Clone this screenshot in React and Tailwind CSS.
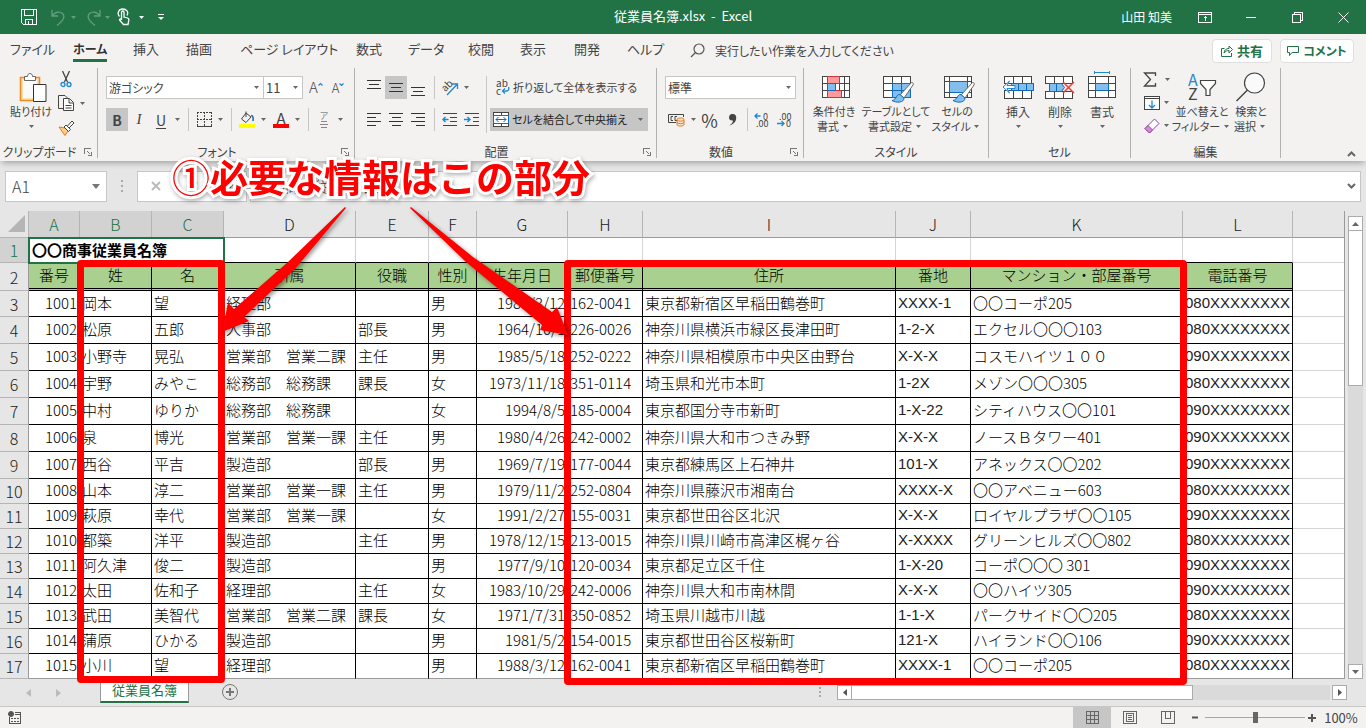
import React from 'react';

/* ---------- data ---------- */

const columns = [
  { key: 'no', letter: 'A', title: '番号', width: 'w-[51px]', right: true, selected: true },
  { key: 'last', letter: 'B', title: '姓', width: 'w-[72px]', selected: true },
  { key: 'first', letter: 'C', title: '名', width: 'w-[72px]', selected: true },
  { key: 'dept', letter: 'D', title: '所属', width: 'w-[132px]' },
  { key: 'post', letter: 'E', title: '役職', width: 'w-[73px]' },
  { key: 'sex', letter: 'F', title: '性別', width: 'w-[48px]' },
  { key: 'birth', letter: 'G', title: '生年月日', width: 'w-[91px]', right: true },
  { key: 'zip', letter: 'H', title: '郵便番号', width: 'w-[75px]' },
  { key: 'address', letter: 'I', title: '住所', width: 'w-[253px]' },
  { key: 'block', letter: 'J', title: '番地', width: 'w-[75px]', latin: true },
  { key: 'building', letter: 'K', title: 'マンション・部屋番号', width: 'w-[212px]' },
  { key: 'tel', letter: 'L', title: '電話番号', width: 'w-[110px]', latin: true },
];

const employees = [
  ['1001', '岡本', '望', '経理部', '', '男', '1988/3/12', '162-0041', '東京都新宿区早稲田鶴巻町', 'XXXX-1', '〇〇コーポ205', '080XXXXXXXX'],
  ['1002', '松原', '五郎', '人事部', '部長', '男', '1964/10/1', '226-0026', '神奈川県横浜市緑区長津田町', '1-2-X', 'エクセル〇〇〇103', '080XXXXXXXX'],
  ['1003', '小野寺', '晃弘', '営業部　営業二課', '主任', '男', '1985/5/18', '252-0222', '神奈川県相模原市中央区由野台', 'X-X-X', 'コスモハイツ１００', '090XXXXXXXX'],
  ['1004', '宇野', 'みやこ', '総務部　総務課', '課長', '女', '1973/11/18', '351-0114', '埼玉県和光市本町', '1-2X', 'メゾン〇〇〇305', '080XXXXXXXX'],
  ['1005', '中村', 'ゆりか', '総務部　総務課', '', '女', '1994/8/5', '185-0004', '東京都国分寺市新町', '1-X-22', 'シティハウス〇〇101', '090XXXXXXXX'],
  ['1006', '泉', '博光', '営業部　営業一課', '主任', '男', '1980/4/26', '242-0002', '神奈川県大和市つきみ野', 'X-X-X', 'ノースＢタワー401', '090XXXXXXXX'],
  ['1007', '西谷', '平吉', '製造部', '部長', '男', '1969/7/19', '177-0044', '東京都練馬区上石神井', '101-X', 'アネックス〇〇202', '090XXXXXXXX'],
  ['1008', '山本', '淳二', '営業部　営業一課', '主任', '男', '1979/11/2', '252-0804', '神奈川県藤沢市湘南台', 'XXXX-X', '〇〇アベニュー603', '080XXXXXXXX'],
  ['1009', '萩原', '幸代', '営業部　営業一課', '', '女', '1991/2/27', '155-0031', '東京都世田谷区北沢', 'X-X-X', 'ロイヤルプラザ〇〇105', '090XXXXXXXX'],
  ['1010', '都築', '洋平', '製造部', '主任', '男', '1978/12/15', '213-0015', '神奈川県川崎市高津区梶ヶ谷', 'X-XXXX', 'グリーンヒルズ〇〇802', '080XXXXXXXX'],
  ['1011', '阿久津', '俊二', '製造部', '', '男', '1977/9/10', '120-0034', '東京都足立区千住', '1-X-20', 'コーポ〇〇〇 301', '090XXXXXXXX'],
  ['1012', '太田', '佐和子', '経理部', '主任', '女', '1983/10/29', '242-0006', '神奈川県大和市南林間', 'X-X-X', '〇〇ハイツ305', '090XXXXXXXX'],
  ['1013', '武田', '美智代', '営業部　営業二課', '課長', '女', '1971/7/31', '350-0852', '埼玉県川越市川越', '1-1-X', 'パークサイド〇〇205', '080XXXXXXXX'],
  ['1014', '蒲原', 'ひかる', '製造部', '', '男', '1981/5/2', '154-0015', '東京都世田谷区桜新町', '121-X', 'ハイランド〇〇106', '090XXXXXXXX'],
  ['1015', '小川', '望', '経理部', '', '男', '1988/3/12', '162-0041', '東京都新宿区早稲田鶴巻町', 'XXXX-1', '〇〇コーポ205', '080XXXXXXXX'],
];

const tabs = [
  { name: 'ファイル', width: 'w-[63px]' },
  { name: 'ホーム', width: 'w-[60px]', active: true },
  { name: '挿入', width: 'w-[53px]' },
  { name: '描画', width: 'w-[54px]' },
  { name: 'ページ レイアウト', width: 'w-[116px]' },
  { name: '数式', width: 'w-[52px]' },
  { name: 'データ', width: 'w-[60px]' },
  { name: '校閲', width: 'w-[52px]' },
  { name: '表示', width: 'w-[54px]' },
  { name: '開発', width: 'w-[53px]' },
  { name: 'ヘルプ', width: 'w-[63px]' },
];

/* ---------- small parts ---------- */

const Icon = ({ w, h, children, className = '', ...rest }) => (
  <svg
    width={w}
    height={h}
    viewBox={`0 0 ${w} ${h}`}
    fill="none"
    stroke="#444"
    aria-hidden="true"
    className={`shrink-0 ${className}`}
    {...rest}
  >
    {children}
  </svg>
);

const Caret = ({ className = '', color = '#666' }) => (
  <span className={`flex shrink-0 items-center justify-center ${className}`}>
    <Icon w={5} h={3} stroke="none">
      <path d="M0 0h5L2.5 3z" fill={color} />
    </Icon>
  </span>
);

const Tool = ({ label, className = '', children }) => (
  <button type="button" aria-label={label} className={`flex h-[23px] shrink-0 items-center justify-center ${className}`}>
    {children}
  </button>
);

const Sep = ({ className = '' }) => (
  <span className={`flex h-[23px] shrink-0 justify-center ${className}`}>
    <span className="h-full w-px bg-[#c8c6c4]" />
  </span>
);

const Group = ({ name, className = '', launcher, children }) => (
  <section className={`flex h-[90px] shrink-0 flex-col justify-between border-r border-[#b1b1b1] ${className}`}>
    {children}
    <div className="flex h-3 items-center">
      <span className="flex-1 text-center text-xs leading-3 whitespace-nowrap">{name}</span>
      {launcher && (
        <button type="button" aria-label={`${name}の設定`} className="w-[18px]">
          <Icon w={8} h={8} shapeRendering="crispEdges" stroke="#777" className="mx-auto">
            <path d="M.5 6V.5H7M3 3l3 3M7.5 3.5v4h-4" />
          </Icon>
        </button>
      )}
    </div>
  </section>
);

const BigButton = ({ icon, lines, below, className = 'text-[11px]' }) => (
  <button type="button" className={`flex shrink-0 flex-col items-center leading-[15px] whitespace-nowrap ${className}`}>
    <span className="flex h-[34px] items-center justify-center">{icon}</span>
    {lines.map((line, i) => (
      <span key={line} className="flex justify-center">
        {line}
        {!below && i === lines.length - 1 && <Caret className="w-3" />}
      </span>
    ))}
    {below && <Caret className="h-[15px]" />}
  </button>
);

const Picker = ({ label, value, className = '' }) => (
  <span className={`relative flex h-[23px] items-center border border-[#c6c6c6] bg-white ${className}`}>
    <select aria-label={label} className="h-full w-full appearance-none bg-transparent pl-0.5 outline-none">
      <option>{value}</option>
    </select>
    <Caret className="pointer-events-none absolute right-1" />
  </span>
);

const Lines = ({ d }) => (
  <Icon w={16} h={16} shapeRendering="crispEdges" stroke="#333">
    <path d={d} />
  </Icon>
);

const Brush = () => (
  <g>
    <path d="M29.5 7.5c2 0 2 1.500 1.500 2.500L22 23l-4-3z" fill="#fff" stroke="#666" />
    <path d="M18 19.500c-4-.5-3 5-8 6 4 2.500 12 2.500 12-2.500z" fill="#83beec" stroke="#0f6cbd" />
  </g>
);

/* ---------- title bar ---------- */

const TitleBar = () => (
  <header className="flex h-[34px] items-center bg-[#217346] text-[13px] text-white">
    <div className="flex flex-1 items-center">
      <button type="button" aria-label="上書き保存" className="ml-5 w-[31px]">
        <Icon w={18} h={18} stroke="#fff" shapeRendering="crispEdges">
          <path d="M1.500 1.500h15v15H3.500l-2-2zM4.500 1.500v6h9v-6M5.500 16.500v-5h7v5M8.500 16v-3" />
        </Icon>
      </button>
      <button type="button" aria-label="元に戻す" className="flex w-[34px] items-center opacity-30">
        <Icon w={16} h={17} stroke="#fff" strokeWidth="1.3">
          <path d="M1 1v6h6M1.500 6.500C4 3 8 2 11.500 4.500c3 3 1 7-5.500 12" />
        </Icon>
        <Caret color="#fff" className="w-3" />
      </button>
      <button type="button" aria-label="やり直し" className="flex w-[32px] items-center opacity-30">
        <Icon w={16} h={17} stroke="#fff" strokeWidth="1.3">
          <path d="M15 1v6H9M14.500 6.500C12 3 8 2 4.500 4.500c-3 3-1 7 5.500 12" />
        </Icon>
        <Caret color="#fff" className="w-3" />
      </button>
      <button type="button" aria-label="タッチ/マウス モードの切り替え" className="flex w-[36px] items-center">
        <Icon w={14} h={18} stroke="#fff" strokeWidth="1.3">
          <path d="M4.500 12V4.500c0-2 2.500-2 2.500 0V9l3.500 1c1.200.4 1.500 1 1.300 2l-.8 4.500H6.500L2.500 12c0-1.500 1.200-1.500 2 0M2.500 8.500C-.5 5 2 1 5.700 1s6.300 3 4.300 6.500" />
        </Icon>
        <Caret color="#fff" className="ml-1 w-3" />
      </button>
      <button type="button" aria-label="クイック アクセス ツール バーのカスタマイズ" className="ml-1">
        <Icon w={8} h={7} stroke="#fff">
          <path d="M1 .5h6" />
          <path d="M1 3h6L4 6z" fill="#fff" stroke="none" />
        </Icon>
      </button>
    </div>
    <h1 className="pb-0.5 whitespace-pre">従業員名簿.xlsx  -  Excel</h1>
    <div className="flex flex-1 items-center justify-end">
      <span className="mr-[26px] text-xs">山田 知美</span>
      <button type="button" aria-label="リボンの表示オプション" className="w-12">
        <Icon w={14} h={11} stroke="#fff" shapeRendering="crispEdges">
          <path d="M.5.5h13v10H.500zM.5 2.500h13M7.500 9V4M5.500 6.500l2-2 2 2" />
        </Icon>
      </button>
      <button type="button" aria-label="最小化" className="w-[46px]">
        <Icon w={11} h={10} stroke="#fff" shapeRendering="crispEdges"><path d="M0 5.500h10" /></Icon>
      </button>
      <button type="button" aria-label="元のサイズに戻す" className="w-[46px]">
        <Icon w={11} h={11} stroke="#fff" shapeRendering="crispEdges"><path d="M.5 2.500h8v8h-8zM2.500 2V.5h8v8H9" /></Icon>
      </button>
      <button type="button" aria-label="閉じる" className="w-[28px]">
        <Icon w={11} h={11} stroke="#fff"><path d="M.5.5l10 10M10.500.5l-10 10" /></Icon>
      </button>
    </div>
  </header>
);

const TabStrip = () => (
  <nav className="flex h-[33px] items-center pl-2.5 text-[13px] whitespace-nowrap">
    {tabs.map((tab) => (
      <div key={tab.name} className={`h-full shrink-0 ${tab.width}`}>
        <button
          type="button"
          className={tab.active ? 'mt-1 h-6 border-b-3 border-[#217346] text-xs font-bold text-[#333]' : 'mt-1 h-6 border-b-3 border-transparent'}
        >
          {tab.name}
        </button>
      </div>
    ))}
    <label className="flex flex-1 items-center">
      <Icon w={15} h={15} stroke="#555" strokeWidth="1.2">
        <circle cx="9" cy="6" r="5" />
        <path d="M5.500 9.500L1 14" />
      </Icon>
      <input
        aria-label="操作アシスト"
        placeholder="実行したい作業を入力してください"
        className="ml-2.5 w-52 bg-transparent text-xs outline-none placeholder:text-[#444]"
      />
    </label>
    <button type="button" className="mr-2 flex h-6 w-[60px] items-center justify-center gap-1 rounded-sm border border-[#e1dfdd] bg-white font-bold text-[#217346]">
      <Icon w={12} h={12} stroke="#217346">
        <path d="M3.500 3.500h-3v8h10V8M3 8c.5-3 2-4.500 5-4.500V1l3.500 3.500L8 8V5.500C6 5.500 4.500 6 3 8z" />
      </Icon>
      共有
    </button>
    <button type="button" className="mr-3 flex h-6 w-[74px] items-center justify-center gap-1 rounded-sm border border-[#e1dfdd] bg-white text-xs font-bold text-[#217346]">
      <Icon w={12} h={12} stroke="#217346">
        <path d="M.5 1.500h11v6H5l-2.500 3v-3h-2z" />
      </Icon>
      コメント
    </button>
  </nav>
);

/* ---------- ribbon ---------- */

const ClipboardGroup = () => (
  <Group name="クリップボード" className="w-[98px]" launcher>
    <div className="flex pt-0.5 pl-1.5">
      <BigButton
        className="w-[50px] text-[11px]"
        below
        lines={['貼り付け']}
        icon={
          <Icon w={28} h={31} className="ml-1">
            <path d="M1.500 5.500h19v23h-19z" stroke="#f08a24" strokeWidth="1.600" fill="#fce1b0" />
            <path d="M4 8h14v18H4z" fill="#fafafa" stroke="none" />
            <path d="M5.500 8.500v-4h3c0-4 5-4 5 0h3v4z" fill="#fff" stroke="#666" />
            <path d="M14.500 12.500h12.500v17H14.500z" fill="#fff" stroke="#333" />
          </Icon>
        }
      />
      <div className="flex flex-col">
        <Tool label="切り取り" className="w-5 pb-1">
          <Icon w={12} h={17}>
            <path d="M2.500 0l5 11M9.500 0l-5 11" stroke="#444" strokeWidth="1.300" />
            <circle cx="3" cy="13.500" r="2" stroke="#1e88d0" strokeWidth="1.300" />
            <circle cx="9" cy="13.500" r="2" stroke="#1e88d0" strokeWidth="1.300" />
          </Icon>
        </Tool>
        <Tool label="コピー" className="w-8 justify-start pb-0.5 pl-0.5">
          <Icon w={16} h={17}>
            <path d="M5 13.500H.500V.500H7L9.500 3" />
            <path d="M5.500 3.500h6l4 4v8h-10zM11 4v4h4M7.500 10.500h6M7.500 13h6" fill="#fff" />
          </Icon>
          <Caret className="ml-0.5 w-3" />
        </Tool>
        <Tool label="書式のコピー/貼り付け" className="w-5">
          <Icon w={17} h={16}>
            <path d="M1 7l6 1 3 3-3 4.500z" fill="#fbd08a" stroke="#e8761c" />
            <path d="M6 7l4.500 4.500 2-2L8 5zM9.500 6L14 1l2 2-5 5" fill="#fff" stroke="#444" />
          </Icon>
        </Tool>
      </div>
    </div>
  </Group>
);

const FontGroup = () => (
  <Group name="フォント" className="w-[257px]" launcher>
    <div className="flex flex-col gap-[9px] pt-2 pl-2">
      <div className="flex">
        <Picker label="フォント" value="游ゴシック" className="w-[158px] text-xs" />
        <Picker label="フォント サイズ" value="11" className="-ml-px w-10 text-[13px]" />
        <Tool label="フォント サイズの拡大" className="w-[26px] text-[15px] font-light">
          A
          <Icon w={5} h={12} stroke="#1e88d0" strokeWidth="1.200"><path d="M.5 3.500l2-2 2 2" /></Icon>
        </Tool>
        <Tool label="フォント サイズの縮小" className="w-[18px] text-[13px] font-light">
          A
          <Icon w={5} h={12} stroke="#1e88d0" strokeWidth="1.200"><path d="M.5 1.500l2 2 2-2" /></Icon>
        </Tool>
      </div>
      <div className="flex">
        <Tool label="太字" className="w-[22px] bg-[#c6c6c6] text-sm font-bold">B</Tool>
        <Tool label="斜体" className="w-[22px] font-['Liberation_Serif',serif] text-[15px] italic">I</Tool>
        <Tool label="下線" className="w-[22px] text-sm underline underline-offset-2">U</Tool>
        <Caret className="w-2.5" />
        <Sep className="w-3" />
        <Tool label="罫線" className="w-5">
          <Icon w={15} h={15} shapeRendering="crispEdges">
            <path d="M0 .5h15M.5 0v14M14.500 0v14M0 7.500h15M7.500 0v14" strokeDasharray="2 1" />
            <path d="M0 14.500h15" strokeWidth="2" />
          </Icon>
        </Tool>
        <Caret className="w-3" />
        <Sep className="w-2.5" />
        <Tool label="塗りつぶしの色" className="w-[22px]">
          <Icon w={16} h={17}>
            <path d="M7 2L2.500 8 7 11.500l5-5.500L7 2zM7 6V.5" />
            <path d="M12 4.500c2 0 2.500 2 2 5.500" stroke="#1e6bb8" strokeWidth="1.600" />
            <path d="M0 13h16v4H0z" fill="#ff0" stroke="none" />
          </Icon>
        </Tool>
        <Caret className="w-2.5" />
        <Tool label="フォントの色" className="w-[26px]">
          <span className="w-4 border-b-4 border-[#f00] text-[15px] leading-[13px]">A</span>
        </Tool>
        <Caret className="w-1.5" />
        <Sep className="w-4" />
        <Tool label="ふりがなの表示/非表示" className="w-4 flex-col text-[#888]">
          <span className="text-[9px] leading-[9px]">ア</span>
          <Icon w={8} h={8} stroke="#888" shapeRendering="crispEdges"><path d="M1 1.500h6M0 4.500h8M1 7.500h6" /></Icon>
        </Tool>
        <Caret className="w-4" />
      </div>
    </div>
  </Group>
);

const AlignGroup = () => (
  <Group name="配置" className="w-[302px]" launcher>
    <div className="flex pt-2 pl-[7px]">
      <div className="flex flex-col gap-[9px]">
        <div className="flex">
          <Tool label="上揃え" className="w-[23px]"><Lines d="M1 .5h14M3 4.500h10M1 8.500h14" /></Tool>
          <Tool label="上下中央揃え" className="w-[22px] bg-[#c6c6c6]"><Lines d="M1 3.500h14M3 7.500h10M1 11.500h14" /></Tool>
          <Tool label="下揃え" className="w-[22px]"><Lines d="M1 7.500h14M3 11.500h10M1 15.500h14" /></Tool>
          <Sep className="w-2.5" />
          <Tool label="方向" className="w-[22px]">
            <Icon w={18} h={17}>
              <path d="M6 16L16 5.500M11 5h5.500v5" stroke="#1e88d0" strokeWidth="1.300" />
              <text x="0" y="11" fontSize="10" fill="#444" stroke="none" transform="rotate(-45 5 7)">ab</text>
            </Icon>
          </Tool>
          <Caret className="w-2.5" />
        </div>
        <div className="flex">
          <Tool label="左揃え" className="w-[23px]"><Lines d="M1 1.500h14M1 5.500h9M1 9.500h14M1 13.500h9" /></Tool>
          <Tool label="中央揃え" className="w-[22px]"><Lines d="M1 1.500h14M4 5.500h9M1 9.500h14M4 13.500h9" /></Tool>
          <Tool label="右揃え" className="w-[22px]"><Lines d="M1 1.500h14M6 5.500h9M1 9.500h14M6 13.500h9" /></Tool>
          <Sep className="w-2.5" />
          <Tool label="インデントを減らす" className="w-[22px]">
            <Icon w={16} h={14}>
              <path d="M1 .5h14M8 4.500h7M8 8.500h7M1 12.500h14" shapeRendering="crispEdges" />
              <path d="M6.500 6.500H1M3.500 4L1 6.500 3.500 9" stroke="#1e88d0" strokeWidth="1.400" />
            </Icon>
          </Tool>
          <Tool label="インデントを増やす" className="w-[22px]">
            <Icon w={16} h={14}>
              <path d="M1 .5h14M9 4.500h6M9 8.500h6M1 12.500h14" shapeRendering="crispEdges" />
              <path d="M0 6.500h6M3.500 4L6 6.500 3.500 9" stroke="#1e88d0" strokeWidth="1.400" />
            </Icon>
          </Tool>
        </div>
      </div>
      <span className="ml-[3px] h-[57px] w-px bg-[#c8c6c4]" />
      <div className="ml-[3px] flex flex-col gap-[9px] text-[11px] whitespace-nowrap">
        <button type="button" className="flex h-[23px] items-center pl-1.5">
          <Icon w={15} h={17} className="mr-0.5">
            <text x="0" y="8" fontSize="10" fill="#444" stroke="none">ab</text>
            <text x="0" y="16" fontSize="10" fill="#444" stroke="none">c</text>
            <path d="M12.500 8c1.500 4-2 4.500-6 4M9 9.500L6.500 12 9 14.500" stroke="#1e88d0" strokeWidth="1.300" />
          </Icon>
          折り返して全体を表示する
        </button>
        <button type="button" className="flex h-[23px] w-[158px] items-center bg-[#c6c6c6] pl-[3px]">
          <Icon w={16} h={15} shapeRendering="crispEdges" className="mr-[3px]">
            <path d="M.5.5h15v14H.500zM8 0v15" fill="#fff" />
            <path d="M.5 3.500h15v8H.500z" fill="#fff" stroke="#0f6cbd" />
            <path d="M3 7.500h10M5.500 5l-2.500 2.500 2.500 2.500M10.500 5l2.500 2.500-2.500 2.500" stroke="#0f6cbd" shapeRendering="auto" />
          </Icon>
          <span className="flex-1 text-left text-[#222]">セルを結合して中央揃え</span>
          <Caret className="w-4" />
        </button>
      </div>
    </div>
  </Group>
);

const NumberGroup = () => (
  <Group name="数値" className="w-[147px]" launcher>
    <div className="flex flex-col gap-[9px] pt-2 pl-2">
      <Picker label="表示形式" value="標準" className="w-[131px] text-xs" />
      <div className="flex">
        <Tool label="通貨表示形式" className="w-[23px]">
          <Icon w={17} h={14}>
            <path d="M8 9.500H.500v-8h15V4M5 3.500H3v4h2M9 3.500H7v4h2" />
            <path d="M9 6.500c0-2 7-2 7 0v5c0 2-7 2-7 0zM9 7c1 1.500 6 1.500 7 0M9 9.500c1 1.500 6 1.500 7 0" fill="#fde3c8" stroke="#e8761c" />
          </Icon>
        </Tool>
        <Caret className="w-2.5" />
        <Tool label="パーセント スタイル" className="w-[23px] text-lg">%</Tool>
        <Tool label="桁区切りスタイル" className="w-[23px]">
          <Icon w={9} h={13} stroke="none"><path d="M4 1c3-.5 4.500 1.500 4.200 4C8 9 5.500 11 1.500 12.500 3.500 11 4.800 9.500 5 7.500 2.500 8 1 6.500 1 4.500 1 2.500 2.300 1.200 4 1z" fill="#444" /></Icon>
        </Tool>
        <Sep className="w-1.5" />
        <Tool label="小数点以下の表示桁数を増やす" className="w-6">
          <Icon w={16} h={16}>
            <path d="M6.500 4H.500M3.500 1.500L1 4l2.500 2.500" stroke="#1e88d0" strokeWidth="1.300" />
            <text x="9" y="8" fontSize="9" fill="#444" stroke="none">0</text>
            <text x="2" y="15" fontSize="9" fill="#444" stroke="none">.00</text>
          </Icon>
        </Tool>
        <Tool label="小数点以下の表示桁数を減らす" className="w-[22px]">
          <Icon w={16} h={16}>
            <path d="M0 11.500h7M4.500 9L7 11.500 4.500 14" stroke="#1e88d0" strokeWidth="1.300" />
            <text x="2" y="8" fontSize="9" fill="#444" stroke="none">.00</text>
            <text x="9" y="15" fontSize="9" fill="#444" stroke="none">0</text>
          </Icon>
        </Tool>
      </div>
    </div>
  </Group>
);

const StyleGroup = () => (
  <Group name="スタイル" className="w-[185px]">
    <div className="flex pt-0.5">
      <BigButton
        className="w-[60px] text-[11px]"
        lines={['条件付き', '書式']}
        icon={
          <Icon w={28} h={24} shapeRendering="crispEdges" className="ml-1">
            <path d="M.5 1.500h27v21H.500zM5.500 1v21M22.500 1v21M17.500 1v21M0 8.500h28M0 15.500h28" fill="#fff" />
            <path d="M5.500 1.500h12v7h-12zM5.500 15.500h14v7h-14z" fill="#ff9a9a" stroke="#d13438" />
            <path d="M5.500 8.500h8v7h-8z" fill="#83beec" stroke="#0f6cbd" />
          </Icon>
        }
      />
      <BigButton
        className="w-16 text-[11px]"
        lines={['テーブルとして', '書式設定']}
        icon={
          <Icon w={32} h={28} className="mt-1 ml-1">
            <path d="M1.500 1.500h27v21h-27zM10.500 1v21M19.500 1v21M1 8.500h28M1 15.500h28" fill="#fff" shapeRendering="crispEdges" />
            <path d="M10.500 8.500h18v14h-18zM19.500 8v14M10 15.500h18" fill="#83beec" stroke="#0f6cbd" shapeRendering="crispEdges" />
            <Brush />
          </Icon>
        }
      />
      <BigButton
        className="w-[58px] text-[11px]"
        lines={['セルの', 'スタイル']}
        icon={
          <Icon w={32} h={28} className="mt-1 ml-1">
            <path d="M1.500 1.500h27v21h-27zM6.500 1v21M1 6.500h28M1 17.500h28M24.500 1v21" fill="#fff" shapeRendering="crispEdges" />
            <path d="M6.500 6.500h18v11h-18z" fill="#83beec" stroke="#0f6cbd" shapeRendering="crispEdges" />
            <Brush />
          </Icon>
        }
      />
    </div>
  </Group>
);

const CellGroup = () => (
  <Group name="セル" className="w-[142px]">
    <div className="flex pt-0.5 pl-2">
      <BigButton
        below
        className="w-[42px] text-xs"
        lines={['挿入']}
        icon={
          <Icon w={32} h={23}>
            <path d="M2.500 7V.500h27v22h-27V15M2 7.500h28M2 14.500h28M11.500 0v7M20.500 0v7M11.500 15v7M20.500 15v7" fill="#fff" shapeRendering="crispEdges" />
            <path d="M9.500 7.500h22v7h-22zM16.500 7v7M24.500 7v7" fill="#83beec" stroke="#0f6cbd" shapeRendering="crispEdges" />
            <path d="M13 9.500H5L7.500 5 1 11l6.500 6L5 12.500h8z" fill="#fff" stroke="#1e88d0" />
          </Icon>
        }
      />
      <BigButton
        below
        className="w-[42px] text-xs"
        lines={['削除']}
        icon={
          <Icon w={30} h={23}>
            <path d="M.5.5h27v7H.500zM.500 15.500h27v7H.500zM9.500 0v7M18.500 0v7M9.500 16v7M18.500 16v7" fill="#fff" shapeRendering="crispEdges" />
            <path d="M4.500 7.500h12l3 4-3 4h-12zM11.500 7v8" fill="#83beec" stroke="#0f6cbd" />
            <path d="M18 6l11 11M29 6L18 17" stroke="#e8403a" strokeWidth="1.500" />
          </Icon>
        }
      />
      <BigButton
        below
        className="w-[42px] text-xs"
        lines={['書式']}
        icon={
          <Icon w={28} h={28} shapeRendering="crispEdges" className="mb-1">
            <path d="M.5 5.500h27v21H.500zM7.500 5v21M20.500 5v21M0 12.500h28M0 19.500h28" fill="#fff" />
            <path d="M7.500 12.500h13v7h-13z" fill="#83beec" stroke="#0f6cbd" />
            <path d="M6.500 0v3M21.500 0v3M6 1.500h16" stroke="#1e88d0" />
          </Icon>
        }
      />
    </div>
  </Group>
);

const EditGroup = () => (
  <Group name="編集" className="w-[150px]">
    <div className="flex pt-0.5 pl-[9px]">
      <div className="flex w-8 flex-col">
        <Tool label="オート SUM" className="w-8 pb-1">
          <Icon w={14} h={15} strokeWidth="1.300"><path d="M12.500 4V1H1.500l6 6.500-6 6.500h11v-3" /></Icon>
          <Caret className="ml-2" />
        </Tool>
        <Tool label="フィル" className="w-8 pb-1">
          <Icon w={16} h={14}>
            <path d="M.5.5h15v13H.500zM0 2.500h16" fill="#fff" shapeRendering="crispEdges" />
            <path d="M8 4.500V12M5 9l3 3 3-3" stroke="#1e88d0" strokeWidth="1.300" />
          </Icon>
          <Caret className="ml-1" />
        </Tool>
        <Tool label="クリア" className="w-8 pb-1">
          <Icon w={16} h={16} stroke="#9b3fa5">
            <path d="M10.500 1l4.500 4.500L5.500 15 1 10.500z" fill="#fff" />
            <path d="M4 7.500L8.500 12 5.500 15 1 10.500z" fill="#cf8fd6" />
          </Icon>
          <Caret className="ml-1" />
        </Tool>
      </div>
      <BigButton
        className="w-[60px] text-[11px]"
        lines={['並べ替えと', 'フィルター']}
        icon={
          <Icon w={29} h={28}>
            <text x="0" y="13" fontSize="16" fill="#1e88d0" stroke="none">A</text>
            <text x="0" y="27" fontSize="16" fill="#444" stroke="none">Z</text>
            <path d="M12.500 7.500h15v3l-5.500 6v6h-4v-6l-5.500-6z" fill="#fff" strokeWidth="1.200" />
          </Icon>
        }
      />
      <BigButton
        className="w-[38px] text-[11px]"
        lines={['検索と', '選択']}
        icon={
          <Icon w={30} h={30} strokeWidth="1.200">
            <circle cx="18.500" cy="11" r="10" fill="#fafafa" />
            <path d="M11.500 18L.500 29" strokeWidth="1.500" />
          </Icon>
        }
      />
    </div>
  </Group>
);

const Ribbon = () => (
  <div className="relative z-10 flex h-[94px] bg-[#f3f2f1] pt-px shadow-[0_4px_6px_-2px_rgba(0,0,0,0.3)]">
    <ClipboardGroup />
    <FontGroup />
    <AlignGroup />
    <NumberGroup />
    <StyleGroup />
    <CellGroup />
    <EditGroup />
    <button type="button" aria-label="リボンを折りたたむ" className="mr-2.5 mb-1 ml-auto self-end">
      <Icon w={9} h={6} stroke="#666" strokeWidth="2"><path d="M1 5l3.500-3.500L8 5" /></Icon>
    </button>
  </div>
);

const FormulaBar = () => (
  <div className="flex h-[50px] shrink-0 items-center pr-[5px] pl-[5px] text-[15px] text-[#444]">
    <div className="flex h-[31px] w-[102px] items-center border border-[#c6c6c6] bg-white">
      <input aria-label="名前ボックス" defaultValue="A1" className="w-20 bg-transparent pl-1.5 text-base font-light outline-none" />
      <button type="button" aria-label="名前の一覧" className="ml-1.5">
        <Icon w={8} h={5} stroke="none"><path d="M0 0h8L4 5z" fill="#777" /></Icon>
      </button>
    </div>
    <Icon w={30} h={12} stroke="none">
      <path d="M14 0h2v2h-2zM14 5h2v2h-2zM14 10h2v2h-2z" fill="#aaa" />
    </Icon>
    <div className="flex h-[31px] w-[110px] items-center border border-[#c6c6c6] bg-white">
      <button type="button" aria-label="キャンセル" className="w-9">
        <Icon w={10} h={10} stroke="#bbb" strokeWidth="2" className="mx-auto"><path d="M1 1l8 8M9 1L1 9" /></Icon>
      </button>
      <button type="button" aria-label="入力" className="w-9">
        <Icon w={12} h={10} stroke="#bbb" strokeWidth="2" className="mx-auto"><path d="M1 5l3 4 7-8" /></Icon>
      </button>
      <button type="button" aria-label="関数の挿入" className="w-9 font-['Liberation_Serif',serif] italic">fx</button>
    </div>
    <div className="ml-[3px] flex h-[31px] flex-1 items-center border border-[#c6c6c6] bg-white">
      <input aria-label="数式バー" defaultValue="〇〇商事従業員名簿" className="flex-1 bg-transparent pl-1 font-light outline-none" />
      <button type="button" aria-label="数式バーの展開" className="mr-1">
        <Icon w={9} h={6} stroke="#666" strokeWidth="2"><path d="M1 1l3.500 3.500L8 1" /></Icon>
      </button>
    </div>
  </div>
);

/* ---------- sheet ---------- */

const RowHead = ({ n, selected }) => (
  <th
    scope="row"
    className={`border-r border-b border-r-[#9b9b9b] border-b-[#b5b5b5] p-0 text-center text-base leading-5 font-light ${
      selected ? 'bg-[#d2d2d2] text-[#217346]' : 'bg-[#e6e6e6] text-[#222]'
    }`}
  >
    {n}
  </th>
);

const Sheet = () => (
  <table className="w-full table-fixed border-separate border-spacing-0 border-r border-[#9b9b9b] bg-white text-[15px] leading-5 font-light whitespace-nowrap text-black">
    <colgroup>
      <col className="w-[29px]" />
      {columns.map((c) => (
        <col key={c.key} className={c.width} />
      ))}
      <col />
    </colgroup>
    <thead>
      <tr className="h-[27px] bg-[#e6e6e6]">
        <td className="border-r border-b border-[#b5b5b5] p-0">
          <Icon w={18} h={18} stroke="none" className="ml-2"><path d="M17 0v17H0z" fill="#b5b5b5" /></Icon>
        </td>
        {columns.map((c) => (
          <th
            key={c.key}
            scope="col"
            className={`border-r border-b border-r-[#b5b5b5] border-b-[#9b9b9b] p-0 text-base leading-5 font-light ${
              c.selected ? 'bg-[#d2d2d2] text-[#217346]' : 'text-[#222]'
            }`}
          >
            {c.letter}
          </th>
        ))}
        <td className="border-b border-[#9b9b9b] p-0" />
      </tr>
    </thead>
    <tbody>
      <tr className="h-[25px]">
        <RowHead n={1} selected />
        <td colSpan={3} className="relative p-0 pb-0.5 pl-[3px] font-bold">
          〇〇商事従業員名簿
          <span className="pointer-events-none absolute -inset-x-px -top-px -bottom-px border-2 border-[#217346]" />
        </td>
        {columns.slice(3).map((c) => (
          <td key={c.key} className="border-r border-b border-r-[#d4d4d4] border-b-black p-0" />
        ))}
        <td className="border-b border-[#d4d4d4] p-0" />
      </tr>
      <tr className="h-7">
        <RowHead n={2} />
        {columns.map((c) => (
          <td key={c.key} className="border-r border-b-3 border-black bg-[#a9d08e] p-0 pb-0.5 text-center [border-bottom-style:double]">
            {c.title}
          </td>
        ))}
        <td className="border-b border-[#d4d4d4] p-0" />
      </tr>
      {employees.map((row, r) => (
        <tr key={row[0]} className={r === 0 ? 'h-[26px]' : r < 7 ? 'h-[27px]' : 'h-[25px]'}>
          <RowHead n={r + 3} />
          {row.map((value, i) => (
            <td
              key={columns[i].key}
              className={`border-r border-b border-r-black p-0 pb-0.5 ${r === employees.length - 1 ? 'border-b-[#9b9b9b]' : 'border-b-black'} ${
                columns[i].right ? 'pr-0.5 text-right' : 'pl-0.5'
              } ${columns[i].latin ? "font-['Liberation_Sans',sans-serif] text-[#222]" : ''}`}
            >
              {value}
            </td>
          ))}
          <td className={r === employees.length - 1 ? 'border-b border-[#9b9b9b] p-0' : 'border-b border-[#d4d4d4] p-0'} />
        </tr>
      ))}
    </tbody>
  </table>
);

const VerticalScroll = () => (
  <div className="flex w-[21px] shrink-0 flex-col pt-[5px] pr-[3px] pl-[3px]">
    <button type="button" aria-label="上へスクロール" className="flex h-[15px] items-center justify-center border border-[#ababab] bg-white">
      <Icon w={7} h={4} stroke="none"><path d="M0 4h7L3.500 0z" fill="#666" /></Icon>
    </button>
    <div className="flex-1 bg-[#dadada]">
      <div className="h-[155px] border border-t-0 border-[#ababab] bg-white" />
    </div>
    <button type="button" aria-label="下へスクロール" className="flex h-[15px] items-center justify-center border border-[#ababab] bg-white">
      <Icon w={7} h={4} stroke="none"><path d="M0 0h7L3.500 4z" fill="#666" /></Icon>
    </button>
  </div>
);

const SheetTabs = () => (
  <div className="flex h-[27px] shrink-0">
    <div className="flex w-[100px] items-center pl-[26px]">
      <button type="button" aria-label="前のシート" className="w-7">
        <Icon w={5} h={8} stroke="none"><path d="M5 0v8L0 4z" fill="#bbb" /></Icon>
      </button>
      <button type="button" aria-label="次のシート" className="w-7">
        <Icon w={5} h={8} stroke="none" className="ml-0.5"><path d="M0 0v8l5-4z" fill="#bbb" /></Icon>
      </button>
    </div>
    <button type="button" className="h-6 w-[89px] border-x border-b-2 border-x-[#9b9b9b] border-b-[#217346] bg-white text-[13px] leading-5 text-[#217346]">
      従業員名簿
    </button>
    <button type="button" aria-label="新しいシート" className="ml-8">
      <Icon w={18} h={18} stroke="#777" className="ml-px">
        <circle cx="8" cy="8" r="7.500" />
        <path d="M8 4v8M4 8h8" strokeWidth="2" />
      </Icon>
    </button>
    <div className="ml-auto flex w-[548px] items-center">
      <Icon w={19} h={11} stroke="none"><path d="M1 0h2v2H1zM1 4h2v2H1zM1 8h2v2H1z" fill="#aaa" /></Icon>
      <button type="button" aria-label="左へスクロール" className="flex h-[15px] w-[15px] items-center justify-center border border-[#ababab] bg-white">
        <Icon w={4} h={7} stroke="none"><path d="M4 0v7L0 3.500z" fill="#555" /></Icon>
      </button>
      <div className="h-[15px] flex-1 bg-[#dadada]">
        <div className="h-full w-[341px] border border-l-0 border-[#ababab] bg-white" />
      </div>
      <button type="button" aria-label="右へスクロール" className="mr-[19px] ml-0.5 flex h-[15px] w-[15px] items-center justify-center border border-[#ababab] bg-white">
        <Icon w={4} h={7} stroke="none"><path d="M0 0v7l4-3.500z" fill="#555" /></Icon>
      </button>
    </div>
  </div>
);

const StatusBar = () => (
  <footer className="flex h-[22px] shrink-0 items-center border-t border-[#c6c6c6] bg-[#f3f2f1] text-[13px]">
    <button type="button" aria-label="マクロの記録" className="ml-2">
      <Icon w={14} h={13} shapeRendering="crispEdges" stroke="#555">
        <path d="M1.500 6v6.500h11V1.500H7M7 3h6M3 7.500h2M6 7.500h2M9 7.500h2M3 10.500h2M6 10.500h2M9 10.500h2" />
        <circle cx="3" cy="3" r="2.500" fill="#555" shapeRendering="auto" />
      </Icon>
    </button>
    <div className="ml-auto flex h-full">
      <button type="button" aria-label="標準" className="flex w-[38px] items-center justify-center bg-[#c6c6c6]">
        <Icon w={13} h={13} stroke="#666" shapeRendering="crispEdges"><path d="M.5.5h12v12H.500zM4.500 0v13M8.500 0v13M0 4.500h13M0 8.500h13" /></Icon>
      </button>
      <button type="button" aria-label="ページ レイアウト" className="flex w-[38px] items-center justify-center">
        <Icon w={14} h={13} stroke="#666" shapeRendering="crispEdges"><path d="M.5.5h13v12H.500zM3.500 2.500h7v8h-7zM5 4.500h4M5 6.500h4M5 8.500h4" /></Icon>
      </button>
      <button type="button" aria-label="改ページ プレビュー" className="flex w-[38px] items-center justify-center">
        <Icon w={14} h={13} stroke="#666" shapeRendering="crispEdges"><path d="M.5.5h13v12H.500zM4.500 0v7h5V0M9 7.500H4" /></Icon>
      </button>
    </div>
    <button type="button" aria-label="縮小" className="ml-1">
      <Icon w={14} h={9} stroke="#555" strokeWidth="2"><path d="M1 4.500h6" /></Icon>
    </button>
    <input
      type="range"
      aria-label="ズーム"
      min="10"
      max="190"
      defaultValue="100"
      className="h-3 w-[100px] appearance-none bg-[linear-gradient(#a6a6a6,#a6a6a6)] bg-[length:100%_1px] bg-center bg-no-repeat [&::-webkit-slider-thumb]:h-[11px] [&::-webkit-slider-thumb]:w-[5px] [&::-webkit-slider-thumb]:appearance-none [&::-webkit-slider-thumb]:bg-[#666]"
    />
    <button type="button" aria-label="拡大" className="ml-[3px]">
      <Icon w={8} h={8} stroke="#555" strokeWidth="2"><path d="M0 4h8M4 0v8" /></Icon>
    </button>
    <span className="w-[50px] text-center">100%</span>
  </footer>
);

/* ---------- callout drawn over the window ---------- */

const Callout = () => (
  <div className="pointer-events-none absolute inset-0 z-20 overflow-hidden">
    <div className="absolute top-[260px] left-[77px] h-[423px] w-[148px] rounded border-7 border-[#f00]" />
    <div className="absolute top-[260px] left-[564px] h-[425px] w-[623px] rounded border-7 border-[#f00]" />
    <Icon w={370} h={145} stroke="none" className="absolute top-[200px] left-[215px] drop-shadow-[2px_2px_2px_rgba(0,0,0,0.4)]">
      <path d="M130 7l1 1L80 69 29 117l5 4-27 11 6-29 6 6L73 62z" fill="#f00" />
      <path d="M196 7l-1 1 56 54 76 63-2 5 28 5-11-28-5 5-79-55z" fill="#f00" />
    </Icon>
    <p className="absolute top-[156px] left-[172px] text-[38px] leading-10 font-bold whitespace-nowrap text-[#f00] [paint-order:stroke_fill] drop-shadow-[1px_2px_2px_rgba(0,0,0,0.3)] [-webkit-text-stroke:6px_#fff]">
      <span className="font-medium">①</span>必要な情報はこの部分
    </p>
  </div>
);

export default function App() {
  return (
    <div
      lang="ja"
      className="relative flex min-h-screen flex-col overflow-hidden bg-[#e6e6e6] font-['Noto_Sans_CJK_JP',sans-serif] text-[#444]"
    >
      <TitleBar />
      <div className="bg-[#f3f2f1] [font-feature-settings:'palt']">
        <TabStrip />
        <Ribbon />
      </div>
      <FormulaBar />
      <main className="flex">
        <div className="min-w-0 flex-1">
          <Sheet />
        </div>
        <VerticalScroll />
      </main>
      <SheetTabs />
      <StatusBar />
      <Callout />
    </div>
  );
}
